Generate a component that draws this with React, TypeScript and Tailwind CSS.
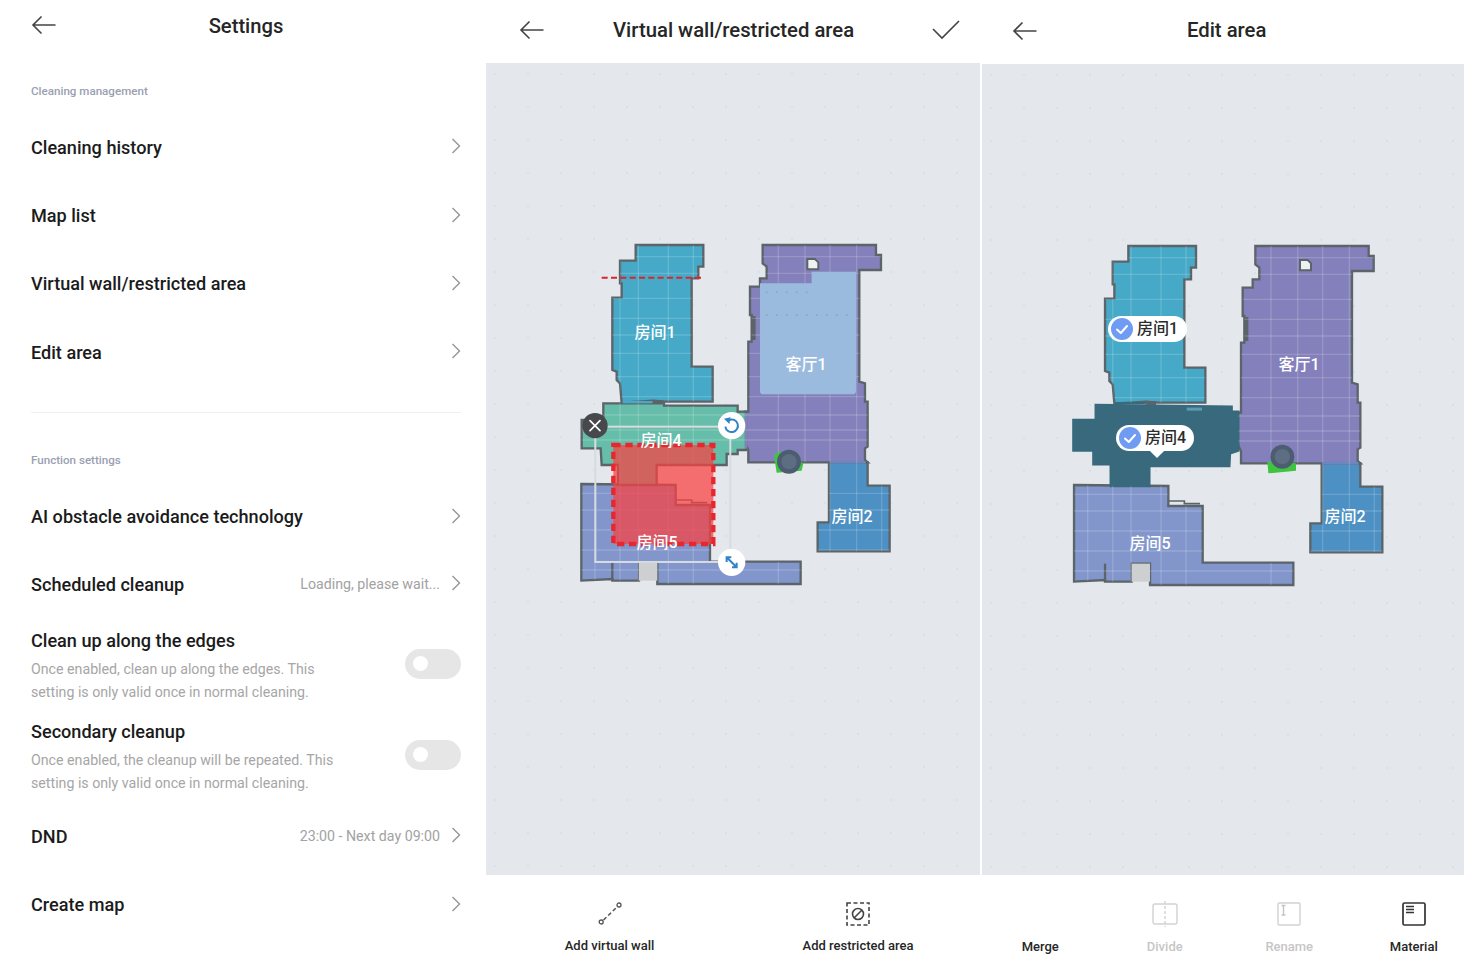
import React from "react";

const sans = "font-['Roboto','Noto_Sans_CJK_SC',sans-serif]";

type Pt = string;

const ROOM1: Pt = "197,45 400,45 400,110 385,110 385,145 365,145 365,410 428,410 428,515 282,515 250,512 155,518 150,460 140,450 140,425 127,420 127,203 155,203 155,160 150,160 150,92 197,92";
const LIVING: Pt = "578,45 918,45 918,75 933,75 933,120 868,120 868,455 885,460 885,515 893,515 893,650 885,655 885,690 893,697 775,697 535,697 535,660 525,640 525,545 535,545 535,335 545,335 545,255 540,255 540,170 570,170 570,145 590,145 590,110 578,100";
const ROOM2: Pt = "777,697 893,697 893,767 959,767 959,964 743,964 743,877 777,877";
const ROOM5: Pt = "34,762 317,765 317,825 420,825 420,995 692,995 692,1062 262,1062 262,998 207,998 207,1052 127,1052 127,1047 34,1052";
const ROOM4_MID: Pt = "100,520 282,520 282,527 503,527 503,545 528,545 528,660 503,660 503,672 470,672 470,705 260,705 260,765 144,765 144,705 95,705 92,655 35,655 35,570 100,570";
const ROOM4_DARK: Pt = "99,522 507,527 507,542 527,542 527,659 502,667 500,705 260,705 260,765 144,765 144,700 92,700 92,659 32,659 32,567 99,567";

function Grid({ clip }: { clip: string }) {
  const xs = [75, 150, 205, 295, 370, 625, 705, 780, 860, 935];
  const ys = [80, 130, 205, 265, 315, 370, 440, 500, 555, 600, 630, 790, 840, 900, 960, 1020];
  return (
    <g clipPath={`url(#${clip})`} stroke="#ffffff" strokeOpacity="0.17" strokeWidth="4">
      {xs.map((x) => <line key={x} x1={x} y1="0" x2={x} y2="1110" />)}
      {ys.map((y) => <line key={y} x1="0" y1={y} x2="1020" y2={y} />)}
    </g>
  );
}

function Rooms({ id, dark }: { id: string; dark: boolean }) {
  const wall = { stroke: "#5b6469", strokeWidth: 7, strokeLinejoin: "miter" as const };
  const r4 = dark ? ROOM4_DARK : ROOM4_MID;
  return (
    <g>
      <defs>
        <clipPath id={id}>
          <polygon points={ROOM1} />
          <polygon points={LIVING} />
          <polygon points={ROOM2} />
          <polygon points={ROOM5} />
          {!dark && <polygon points={r4} />}
        </clipPath>
      </defs>
      <polygon points={ROOM5} fill="#8296cc" {...wall} />
      <polygon points="207,998 262,998 262,1052 207,1052" fill="#cdcfd1" />
      <line x1="127" y1="998" x2="127" y2="1050" {...wall} />
      <polyline points="317,810 365,810 365,818 412,818" fill="none" stroke="#5b6469" strokeWidth="5" />
      <polygon points={ROOM2} fill="#4c90c4" {...wall} />
      <polygon points={ROOM1} fill="#45a9c7" {...wall} />
      <polygon points={LIVING} fill="#8480bb" {...wall} />
      <rect x="781" y="693" width="106" height="8" fill="#6888bf" />
      <rect x="545" y="258" width="12" height="72" fill="#5b6469" />
      <polygon points="712,87 735,87 745,97 745,118 712,118" fill="#eef0f2" stroke="#5b6469" strokeWidth="6" />
      <polygon points={r4} fill={dark ? "#39697c" : "#66bdaa"} {...wall} stroke={dark ? "#39697c" : "#5b6469"} />
      {!dark && <rect x="525" y="549" width="7" height="107" fill="#8480bb" />}
      <rect x="158" y="513" width="90" height="7" fill={dark ? "#39697c" : "#45a9c7"} />
      <Grid clip={id} />
      {dark && <polygon points={r4} fill="#39697c" />}
      {dark && <rect x="372" y="530" width="46" height="9" fill="#5a9cb2" />}
      <rect x="248" y="510" width="32" height="12" fill="#5b6469" />
    </g>
  );
}

function Robot({ dark }: { dark: boolean }) {
  return (
    <g>
      {dark ? (
        <polygon points="614,692 700,697 700,719 617,727" fill="#3ec43e" />
      ) : (
        <polygon points="612,675 630,665 700,700 695,722 620,728" fill="#3ec43e" />
      )}
      <circle cx={dark ? 659 : 657} cy={dark ? 677 : 695} r="36" fill="#4c5d72" />
      <circle cx={dark ? 659 : 657} cy={dark ? 677 : 695} r="23" fill="#5d6d82" />
    </g>
  );
}

function Dots({ id }: { id: string }) {
  return (
    <>
      <defs>
        <pattern id={id} x="8" y="10" width="33" height="33" patternUnits="userSpaceOnUse">
          <circle cx="1" cy="1" r="0.8" fill="#d2d6dc" />
        </pattern>
      </defs>
      <rect width="100%" height="100%" fill={`url(#${id})`} />
    </>
  );
}

function Label({ x, y, children }: { x: number; y: number; children: React.ReactNode }) {
  return (
    <span
      className={`absolute -translate-x-1/2 -translate-y-1/2 whitespace-nowrap text-[16px] font-medium leading-none text-white ${sans}`}
      style={{ left: x, top: y }}
    >
      {children}
    </span>
  );
}

function CheckLabel({ x, y, w, children, tail }: { x: number; y: number; w: number; children: React.ReactNode; tail?: boolean }) {
  return (
    <div
      className={`absolute flex h-[26px] -translate-y-1/2 items-center gap-[3px] rounded-full bg-white pl-[2px] text-[16px] font-medium leading-none text-[#2b2b2b] ${sans}`}
      style={{ left: x, top: y, width: w }}
    >
      <svg width="24" height="24" viewBox="0 0 24 24">
        <circle cx="12" cy="12" r="11" fill="#6f9cf2" />
        <path d="M7 12.5 L10.8 16 L17 9" fill="none" stroke="#fff" strokeWidth="2" strokeLinecap="round" strokeLinejoin="round" />
      </svg>
      {children}
      {tail && <span className="absolute bottom-[-5px] left-[36px] h-[10px] w-[10px] rotate-45 bg-white" />}
    </div>
  );
}

function ArrowLeft() {
  return (
    <svg width="25" height="20" viewBox="0 0 25 20" fill="none" stroke="#444" strokeWidth="1.6">
      <path d="M24.5 10 H2 M10.5 1.5 L2 10 L10.5 18.5" />
    </svg>
  );
}

function Chevron() {
  return (
    <svg className="-mt-[2px]" width="10" height="16" viewBox="0 0 10 16" fill="none" stroke="#969696" strokeWidth="1.4">
      <path d="M1.5 1 L8.5 8 L1.5 15" />
    </svg>
  );
}

function Row({ title, value }: { title: string; value?: string }) {
  return (
    <div className="flex h-[68.4px] items-center justify-between">
      <span className="text-[18.1px] font-medium text-[#1b1b1b]">{title}</span>
      <div className="flex items-center gap-[11px]">
        {value && <span className="text-[14.2px] text-[#a2a2a2]">{value}</span>}
        <Chevron />
      </div>
    </div>
  );
}

function SectionLabel({ children }: { children: React.ReactNode }) {
  return <div className="text-[11.6px] font-medium leading-[14px] text-[#9a9fb2]">{children}</div>;
}

function ToggleRow({ title, lines }: { title: string; lines: string[] }) {
  return (
    <div className="flex items-start justify-between">
      <div>
        <div className="text-[18.1px] font-medium leading-[24px] text-[#1b1b1b]">{title}</div>
        <div className="mt-[5px] text-[14.2px] leading-[23px] text-[#a6a6a6]">
          {lines.map((l) => <div key={l}>{l}</div>)}
        </div>
      </div>
      <div className="mt-[20px] flex h-[30px] w-[56px] items-center rounded-full bg-[#e6e6e6] pl-[8px]">
        <span className="h-[15px] w-[15px] rounded-full bg-white" />
      </div>
    </div>
  );
}

function SettingsPanel() {
  return (
    <div className="flex h-[960px] w-[486px] shrink-0 flex-col bg-white px-[31px] pr-[25px]">
      <div className="relative flex h-[52px] items-center justify-center">
        <div className="absolute left-0 top-[15px]"><ArrowLeft /></div>
        <span className="text-[20.2px] font-medium text-[#262626]">Settings</span>
      </div>
      <div className="mt-[32px] mb-[15px]"><SectionLabel>Cleaning management</SectionLabel></div>
      <Row title="Cleaning history" />
      <Row title="Map list" />
      <Row title="Virtual wall/restricted area" />
      <Row title="Edit area" />
      <div className="mt-[25px] h-px bg-[#f0f0f0]" />
      <div className="mt-[40px] mb-[16px]"><SectionLabel>Function settings</SectionLabel></div>
      <Row title="AI obstacle avoidance technology" />
      <div className="-mt-[0.8px]"><Row title="Scheduled cleanup" value="Loading, please wait..." /></div>
      <div className="mt-[10px]">
        <ToggleRow title="Clean up along the edges" lines={["Once enabled, clean up along the edges. This", "setting is only valid once in normal cleaning."]} />
      </div>
      <div className="mt-[16px]">
        <ToggleRow title="Secondary cleanup" lines={["Once enabled, the cleanup will be repeated. This", "setting is only valid once in normal cleaning."]} />
      </div>
      <div className="mt-[7.5px]">
        <Row title="DND" value="23:00 - Next day 09:00" />
        <Row title="Create map" />
      </div>
    </div>
  );
}

function VirtualPanel() {
  const dotsRow1 = [590, 620, 650, 680, 710];
  const dotsRow2 = [590, 620, 650, 680, 710, 740, 770, 800, 830];
  return (
    <div className="flex h-[960px] w-[494px] shrink-0 flex-col bg-white">
      <div className="flex h-[63px] items-center pb-[3px] pl-[33px] pr-[19px]">
        <ArrowLeft />
        <span className="ml-[69px] text-[20.3px] font-medium text-[#262626]">Virtual wall/restricted area</span>
        <svg className="ml-auto" width="30" height="22" viewBox="0 0 30 22" fill="none" stroke="#444" strokeWidth="1.6">
          <path d="M2 10 L11 19 L28 2" />
        </svg>
      </div>
      <div className="relative h-[812px] bg-[#e4e7ec]">
        <svg className="absolute inset-0" width="494" height="812">
          <Dots id="dotsA" />
          <g transform="translate(84,167) scale(0.3333)">
            <Rooms id="clipA" dark={false} />
            <path d="M570 160 H725 V125 H858 V483 Q858 493 848 493 H580 Q570 493 570 483 Z" fill="#9bbbde" />
            {dotsRow1.map((x) => <circle key={x} cx={x} cy="187" r="3" fill="#86a6cd" />)}
            {dotsRow2.map((x) => <circle key={x} cx={x} cy="255" r="3" fill="#86a6cd" />)}
            <Robot dark={false} />
            <rect x="130" y="645" width="300" height="297" fill="#fa4040" fillOpacity="0.72" />
            <rect x="130" y="645" width="300" height="297" fill="none" stroke="#e8262d" strokeWidth="13" strokeDasharray="22 14" />
            <line x1="95" y1="143" x2="395" y2="143" stroke="#d9262c" strokeWidth="6" strokeDasharray="18 10" />
            <rect x="76" y="590" width="405" height="406" fill="none" stroke="#d8dbdf" strokeWidth="6" />
            <circle cx="75" cy="587" r="38" fill="#46484b" />
            <path d="M60 572 L90 602 M90 572 L60 602" stroke="#fff" strokeWidth="5" strokeLinecap="round" />
            <circle cx="485" cy="587" r="41" fill="#fff" />
            <path d="M477 570 A19 19 0 1 1 466 590" fill="none" stroke="#2f83c9" strokeWidth="6" />
            <path d="M462 566 L482 562 L478 582 Z" fill="#2f83c9" />
            <circle cx="485" cy="997" r="41" fill="#fff" />
            <path d="M470 982 L500 1012 M470 996 V982 H484 M500 998 V1012 H486" fill="none" stroke="#2f83c9" strokeWidth="6" />
          </g>
        </svg>
        <Label x={169} y={270}>房间1</Label>
        <Label x={320} y={302}>客厅1</Label>
        <Label x={175} y={378}>房间4</Label>
        <Label x={171} y={480}>房间5</Label>
        <Label x={366} y={454}>房间2</Label>
      </div>
      <div className="flex flex-1 items-start pl-[58.5px]">
        <ToolA label="Add virtual wall">
          <svg width="26" height="26" viewBox="0 0 26 26" fill="none" stroke="#555" strokeWidth="1.3">
            <circle cx="4.2" cy="21" r="2" />
            <circle cx="22" cy="4" r="2" />
            <path d="M6.5 19 L20 6" strokeDasharray="4 2.5" strokeWidth="1.6" />
          </svg>
        </ToolA>
        <div className="ml-[118.5px]">
          <ToolA label="Add restricted area">
            <svg width="26" height="26" viewBox="0 0 26 26" fill="none" stroke="#444" strokeWidth="1.6">
              <rect x="2" y="2" width="22" height="22" strokeDasharray="4 2.5" />
              <circle cx="13" cy="13" r="5.5" />
              <path d="M9 17 L17 9" />
            </svg>
          </ToolA>
        </div>
      </div>
    </div>
  );
}

function ToolA({ label, children }: { label: string; children: React.ReactNode }) {
  return (
    <div className="mt-[26px] flex w-[130px] flex-col items-center">
      <div className="flex h-[26px] items-center">{children}</div>
      <span className="mt-[11px] whitespace-nowrap text-[13px] font-medium leading-[16px] text-[#262626]">{label}</span>
    </div>
  );
}

function ToolB({ label, muted, children }: { label: string; muted?: boolean; children?: React.ReactNode }) {
  return (
    <div className="flex w-[124.5px] flex-col items-center">
      <div className="flex h-[26px] items-center">{children}</div>
      <span className={`mt-[12px] whitespace-nowrap text-[13px] font-medium leading-[16px] ${muted ? "text-[#c6c6c6]" : "text-[#262626]"}`}>{label}</span>
    </div>
  );
}

function EditPanel() {
  return (
    <div className="flex h-[960px] min-w-0 flex-1 flex-col bg-white">
      <div className="flex h-[64px] items-center pb-[3px]">
        <div className="ml-[30px]"><ArrowLeft /></div>
        <span className="ml-[150px] text-[20.3px] font-medium text-[#262626]">Edit area</span>
      </div>
      <div className="relative h-[811px] bg-[#e4e7ec]">
        <svg className="absolute inset-0" width="482" height="811">
          <Dots id="dotsB" />
          <g transform="translate(80.7,167) scale(0.3333)">
            <Rooms id="clipB" dark={true} />
            <Robot dark={true} />
          </g>
        </svg>
        <Label x={317} y={301}>客厅1</Label>
        <Label x={168} y={480}>房间5</Label>
        <Label x={363} y={453}>房间2</Label>
        <CheckLabel x={126} y={265} w={79}>房间1</CheckLabel>
        <CheckLabel x={134} y={374} w={78} tail>房间4</CheckLabel>
      </div>
      <div className="mt-[26px] flex">
        <div className="ml-[-4px] flex">
          <ToolB label="Merge" />
          <ToolB label="Divide" muted>
            <svg width="26" height="26" viewBox="0 0 26 26" fill="none" stroke="#d2d2d2" strokeWidth="1.4">
              <rect x="1" y="3" width="24" height="20" rx="2" />
              <path d="M13 0 V26" strokeDasharray="3 2" />
            </svg>
          </ToolB>
          <ToolB label="Rename" muted>
            <svg width="24" height="24" viewBox="0 0 24 24" fill="none" stroke="#d2d2d2" strokeWidth="1.4">
              <rect x="1" y="1" width="22" height="22" rx="1" />
              <path d="M4.5 3.5 H8.5 M6.5 3.5 V13 M4.5 13 H8.5" stroke="#c4c4c4" />
            </svg>
          </ToolB>
          <ToolB label="Material">
            <svg width="24" height="24" viewBox="0 0 24 24" fill="none" stroke="#333" strokeWidth="1.7">
              <rect x="1" y="1" width="22" height="22" rx="1.5" />
              <path d="M4 4.5 H12 M4 7.5 H12 M4 10.5 H12" />
            </svg>
          </ToolB>
        </div>
      </div>
    </div>
  );
}

export default function App() {
  return (
    <div className={`flex h-[960px] w-[1464px] overflow-hidden bg-white ${sans}`}>
      <SettingsPanel />
      <VirtualPanel />
      <div className="w-[2px] shrink-0 bg-white" />
      <EditPanel />
    </div>
  );
}
